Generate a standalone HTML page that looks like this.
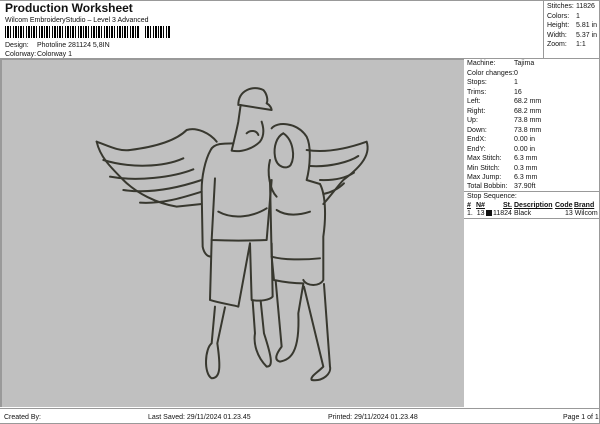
<!DOCTYPE html>
<html><head><meta charset="utf-8"><style>
*{margin:0;padding:0;box-sizing:border-box}
body{width:600px;height:424px;background:#fff;position:relative;font-family:"Liberation Sans",sans-serif;color:#111;overflow:hidden}
.t{position:absolute;font-size:7px;white-space:nowrap;line-height:9px}
#title{position:absolute;left:5px;top:1px;font-size:12px;font-weight:bold}
.bar{position:absolute;left:5px;top:26px;width:135px;height:12px;background:repeating-linear-gradient(90deg,#000 0 1px,#fff 1px 2px,#000 2px 4px,#fff 4px 5px,#000 5px 6px,#fff 6px 8px,#000 8px 9px,#fff 9px 10px,#000 10px 12px,#fff 12px 13px)}
#gray{position:absolute;left:0;top:59px;width:464px;height:348px;background:#c0c0c0;border-left:2px solid #9a9a9a;border-top:1px solid #999}
.line{position:absolute;background:#999}
</style></head><body>
<div id="title">Production Worksheet</div>
<div class="t" style="left:5px;top:16px">Wilcom EmbroideryStudio – Level 3 Advanced</div>
<div class="bar"></div>
<div class="bar" style="left:145px;width:25px"></div>
<div class="t" style="left:5px;top:41px">Design:</div><div class="t" style="left:37px;top:41px">Photoline 281124 5,8IN</div>
<div class="t" style="left:5px;top:50px">Colorway:</div><div class="t" style="left:37px;top:50px">Colorway 1</div>

<div class="line" style="left:0;top:0;width:600px;height:1px"></div>
<div class="line" style="left:599px;top:0;width:1px;height:424px"></div>
<div class="line" style="left:543px;top:0;width:1px;height:59px"></div>
<div class="line" style="left:0;top:58px;width:600px;height:1px"></div>
<div class="t" style="left:547px;top:2px">Stitches:</div><div class="t" style="left:576px;top:2px">11826</div>
<div class="t" style="left:547px;top:12px">Colors:</div><div class="t" style="left:576px;top:12px">1</div>
<div class="t" style="left:547px;top:21px">Height:</div><div class="t" style="left:576px;top:21px">5.81 in</div>
<div class="t" style="left:547px;top:31px">Width:</div><div class="t" style="left:576px;top:31px">5.37 in</div>
<div class="t" style="left:547px;top:40px">Zoom:</div><div class="t" style="left:576px;top:40px">1:1</div>

<div id="gray"></div>
<svg width="464" height="407" style="position:absolute;left:0;top:0" viewBox="0 0 464 407">
<g transform="translate(90,80) scale(0.3333)" fill="none" stroke="#38382f" stroke-width="6" stroke-linecap="round" stroke-linejoin="round">
<path d="M20,185 C30,230 60,260 100,300 C140,340 200,370 260,380 L335,372"/>
<path d="M20,185 C60,200 90,215 120,210 C200,200 260,180 290,150 C320,140 360,160 380,185"/>
<path d="M40,240 C120,265 220,262 280,235"/>
<path d="M60,290 C140,305 250,292 310,268"/>
<path d="M100,330 C180,342 260,325 335,300"/>
<path d="M150,368 C220,372 280,352 335,335"/>
<path d="M650,210 C700,218 760,210 830,185 C845,230 800,270 760,300 C740,322 720,350 700,372"/>
<path d="M660,258 C720,262 780,245 805,228"/>
<path d="M690,300 C740,302 770,292 792,278"/>
<path d="M700,342 C730,336 750,322 762,310"/>
<path d="M445,75 C445,30 490,15 520,30 C530,40 535,60 530,70 C540,75 545,85 545,90 L450,75"/>
<path d="M452,75 L445,125 C438,160 430,190 425,212 C455,218 490,205 510,185 C525,165 520,140 515,125"/>
<path d="M470,160 C480,150 500,150 505,165"/>
<path d="M430,190 C400,190 372,190 362,210 C345,240 335,290 335,330 L338,500 C342,520 352,530 362,530"/>
<path d="M375,295 L365,480 C410,482 480,482 530,480 L545,300"/>
<path d="M385,395 C430,420 490,410 530,385"/>
<path d="M365,480 L360,660 C390,670 430,675 445,680 L480,490"/>
<path d="M480,490 L485,660 C510,665 540,660 548,650 L545,490"/>
<path d="M375,680 L365,790 C345,805 340,880 365,895 C392,895 392,860 382,790 L405,682"/>
<path d="M488,662 L495,760 C490,790 500,830 530,860 C548,860 548,840 522,760 L512,662"/>
<path d="M545,145 C560,125 620,125 650,170 C665,200 660,262 650,300 L690,312 C705,340 710,400 700,470 L700,600 C690,620 650,620 640,600"/>
<path d="M580,160 C560,170 550,200 555,230 C560,262 590,270 602,255 C616,230 610,180 580,160"/>
<path d="M540,240 C530,280 540,330 560,350"/>
<path d="M540,300 L545,530 C580,540 640,540 690,535"/>
<path d="M560,390 C590,410 630,405 660,395"/>
<path d="M545,530 L552,600 C580,606 610,610 640,610"/>
<path d="M557,602 L575,800 C560,820 550,840 570,845 C600,840 630,820 625,700 L640,612"/>
<path d="M642,620 L700,860 C680,880 660,890 665,900 C700,905 725,880 720,860 L702,612"/>
</g></svg>

<div class="t" style="left:467px;top:59px">Machine:</div><div class="t" style="left:514px;top:59px">Tajima</div>
<div class="t" style="left:467px;top:68.5px">Color changes:</div><div class="t" style="left:514px;top:68.5px">0</div>
<div class="t" style="left:467px;top:78px">Stops:</div><div class="t" style="left:514px;top:78px">1</div>
<div class="t" style="left:467px;top:87.5px">Trims:</div><div class="t" style="left:514px;top:87.5px">16</div>
<div class="t" style="left:467px;top:97px">Left:</div><div class="t" style="left:514px;top:97px">68.2 mm</div>
<div class="t" style="left:467px;top:106.5px">Right:</div><div class="t" style="left:514px;top:106.5px">68.2 mm</div>
<div class="t" style="left:467px;top:116px">Up:</div><div class="t" style="left:514px;top:116px">73.8 mm</div>
<div class="t" style="left:467px;top:125.5px">Down:</div><div class="t" style="left:514px;top:125.5px">73.8 mm</div>
<div class="t" style="left:467px;top:135px">EndX:</div><div class="t" style="left:514px;top:135px">0.00 in</div>
<div class="t" style="left:467px;top:144.5px">EndY:</div><div class="t" style="left:514px;top:144.5px">0.00 in</div>
<div class="t" style="left:467px;top:154px">Max Stitch:</div><div class="t" style="left:514px;top:154px">6.3 mm</div>
<div class="t" style="left:467px;top:163.5px">Min Stitch:</div><div class="t" style="left:514px;top:163.5px">0.3 mm</div>
<div class="t" style="left:467px;top:173px">Max Jump:</div><div class="t" style="left:514px;top:173px">6.3 mm</div>
<div class="t" style="left:467px;top:182px">Total Bobbin:</div><div class="t" style="left:514px;top:182px">37.90ft</div>
<div class="line" style="left:464px;top:191px;width:136px;height:1px"></div>
<div class="t" style="left:467px;top:192px">Stop Sequence:</div>
<div class="t" style="left:467px;top:201px;font-weight:bold;text-decoration:underline">#</div>
<div class="t" style="left:476px;top:201px;font-weight:bold;text-decoration:underline">N#</div>
<div class="t" style="left:503px;top:201px;font-weight:bold;text-decoration:underline">St.</div>
<div class="t" style="left:514px;top:201px;font-weight:bold;text-decoration:underline">Description</div>
<div class="t" style="left:555px;top:201px;font-weight:bold;text-decoration:underline">Code</div>
<div class="t" style="left:574px;top:201px;font-weight:bold;text-decoration:underline">Brand</div>
<div class="t" style="left:467px;top:209px">1.&nbsp; 13</div>
<div style="position:absolute;left:486px;top:210px;width:6px;height:6px;background:#111"></div>
<div class="t" style="left:493px;top:209px">11824</div><div class="t" style="left:514px;top:209px">Black</div>
<div class="t" style="left:565px;top:209px">13 Wilcom</div>
<div class="line" style="left:464px;top:218px;width:136px;height:1px"></div>

<div class="line" style="left:0;top:408px;width:600px;height:1px"></div>
<div class="line" style="left:0;top:423px;width:600px;height:1px"></div>
<div class="t" style="left:4px;top:413px">Created By:</div>
<div class="t" style="left:148px;top:413px">Last Saved: 29/11/2024 01.23.45</div>
<div class="t" style="left:328px;top:413px">Printed: 29/11/2024 01.23.48</div>
<div class="t" style="left:563px;top:413px">Page 1 of 1</div>
</body></html>
